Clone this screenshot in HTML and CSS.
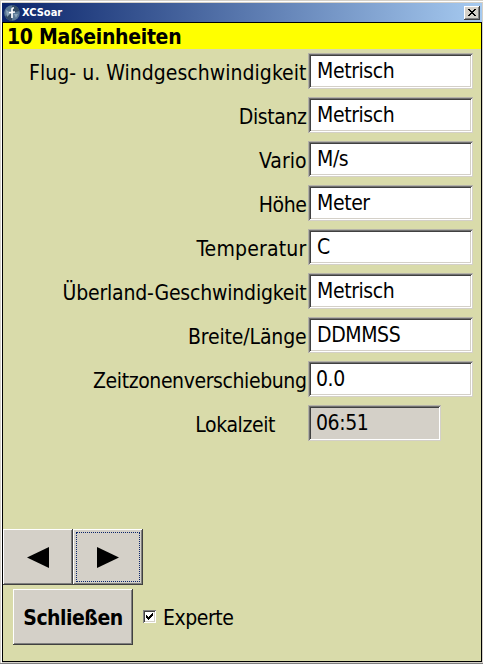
FILE: index.html
```html
<!DOCTYPE html>
<html lang="de">
<head>
<meta charset="utf-8">
<title>XCSoar</title>
<link rel="stylesheet" href="styles.css">
</head>
<body>
<div class="window">
  <header class="titlebar">
    <svg class="logo" width="16" height="16" viewBox="0 0 16 16"><circle cx="8" cy="8" r="7.8" fill="#5b7995"/><path d="M8 0.3A7.7 7.7 0 0 1 15.5 6L8 8zM1 11L8 8V15.7A7.7 7.7 0 0 1 1 11z" fill="#334b64"/><path d="M2 5L7 8L3 12zM10 9L14 9L12 13z" fill="#8ba4b8"/><path d="M10 3H9Q8 3 8 5V13M5 7.5L11 7" fill="none" stroke="#fff" stroke-width="1.7"/></svg>
    <span class="app-name">XCSoar</span>
    <button class="close-x" aria-label="Schließen"><svg width="8" height="7" viewBox="0 0 8 7" shape-rendering="crispEdges"><path d="M0 0h2v1h1v1h2v-1h1v-1h2v1h-1v1h-1v1h-1v1h1v1h1v1h1v1h-2v-1h-1v-1h-2v1h-1v1h-2v-1h1v-1h1v-1h1v-1h-1v-1h-1v-1h-1z"/></svg></button>
  </header>
  <main class="client">
    <h1 class="heading"><span>10 Maßeinheiten</span></h1>
    <div class="form">
      <div class="row"><span class="label speed">Flug- u. Windgeschwindigkeit</span><span class="field">Metrisch</span></div>
      <div class="row"><span class="label">Distanz</span><span class="field">Metrisch</span></div>
      <div class="row"><span class="label vario">Vario</span><span class="field">M/s</span></div>
      <div class="row"><span class="label">Höhe</span><span class="field">Meter</span></div>
      <div class="row"><span class="label temperature">Temperatur</span><span class="field">C</span></div>
      <div class="row"><span class="label task-speed">Überland-Geschwindigkeit</span><span class="field">Metrisch</span></div>
      <div class="row"><span class="label coords">Breite/Länge</span><span class="field">DDMMSS</span></div>
      <div class="row"><span class="label">Zeitzonenverschiebung</span><span class="field numeric">0.0</span></div>
      <div class="row local"><span class="label">Lokalzeit</span><span class="field numeric readonly">06:51</span></div>
    </div>
    <nav class="pager">
      <button class="btn arrow" aria-label="Zurück"><svg width="22" height="21" viewBox="0 0 22 21"><path d="M0 10.5L22 0V21z"/></svg></button>
      <button class="btn arrow focused" aria-label="Weiter"><svg width="22" height="21" viewBox="0 0 22 21"><path d="M22 10.5L0 0V21z"/></svg></button>
    </nav>
    <footer class="actions">
      <button class="btn dismiss">Schließen</button>
      <span class="check"><svg width="7" height="7" viewBox="0 0 7 7" shape-rendering="crispEdges"><path d="M0 2h1v1h1v1h1v-1h1v-1h1v-1h1v-1h1v3h-1v1h-1v1h-1v1h-1v1h-1v-1h-1v-1h-1z"/></svg></span>
      <span class="expert">Experte</span>
    </footer>
  </main>
</div>
</body>
</html>
```
FILE: styles.css
```css
* { box-sizing: border-box; }
body { margin: 0; background: #d4d0c8; font-family: "DejaVu Sans Condensed", "DejaVu Sans", sans-serif; color: #000; overflow: hidden; }
.window { width: 483px; height: 664px; padding: 3px 1px 2px 2px; background: #d4d0c8; border-bottom: 1px solid #808080; box-shadow: inset 1px 0 #d4d0c8, inset 0 1px #d4d0c8, inset 2px 2px #fff; }
.titlebar { display: flex; align-items: center; height: 19px; padding: 0 2px; background: linear-gradient(90deg, #0a246a, #a6caf0); }
.app-name { margin-left: 2px; flex: 1; color: #fff; font-size: 11px; line-height: 18px; font-weight: bold; letter-spacing: 0; }
.close-x { display: flex; align-items: center; justify-content: center; width: 16px; height: 14px; padding: 0 1px 1px 0; background: #d4d0c8; border: 0; box-shadow: inset -1px -1px #404040, inset 1px 1px #fff, inset -2px -2px #808080; }
.client { width: 480px; height: 640px; border: 1px solid #000; background: #d9dbaa; }
.heading { margin: 0; height: 26px; padding-left: 4px; background: #ff0; font-size: 21px; line-height: 29px; letter-spacing: -0.3px; }
.form { padding-top: 4px; }
.row { display: flex; height: 36px; margin-bottom: 8px; }
.label { width: 305px; padding-right: 1.5px; text-align: right; white-space: nowrap; font-size: 21px; line-height: 40px; letter-spacing: -0.4px; }
.speed { letter-spacing: 0.03px; }
.vario { letter-spacing: 0; }
.temperature { letter-spacing: 0.2px; }
.task-speed { letter-spacing: -0.19px; }
.coords { letter-spacing: -0.15px; }
.local .label { padding-right: 33px; }
.field { width: 165px; height: 36px; padding-left: 9px; background: #fff; font-size: 21px; line-height: 36px; letter-spacing: -0.4px; box-shadow: inset 1px 1px #b4b2a8, inset -1px -1px #d4d0c8, inset 2px 2px #707070, inset -2px -2px #fff, inset 3px 3px #404040, inset -3px -3px #d4d0c8; }
.numeric { padding-left: 8px; }
.readonly { width: 133px; background: #d4d0c8; }
.pager { display: flex; margin-top: 88px; }
.btn { display: flex; align-items: center; justify-content: center; height: 56px; padding: 0; border: 0; background: #d4d0c8; color: #000; box-shadow: inset -1px -1px #404040, inset 1px 1px #fff, inset -2px -2px #808080; }
.arrow { width: 70px; }
.focused { outline: 1px dotted #0a246a; outline-offset: -4px; }
.actions { display: flex; align-items: center; margin-top: 4px; padding-left: 10px; }
.dismiss { width: 120px; padding-top: 2px; font: bold 21px "DejaVu Sans Condensed", sans-serif; letter-spacing: -0.5px; }
.check { display: flex; align-items: center; justify-content: center; width: 13px; height: 13px; margin: -1px 7px 0 10px; background: #fff; box-shadow: inset 1px 1px #808080, inset -1px -1px #fff, inset 2px 2px #404040, inset -2px -2px #d4d0c8; }
.expert { padding-top: 2px; font-size: 21px; letter-spacing: -0.45px; }
```
